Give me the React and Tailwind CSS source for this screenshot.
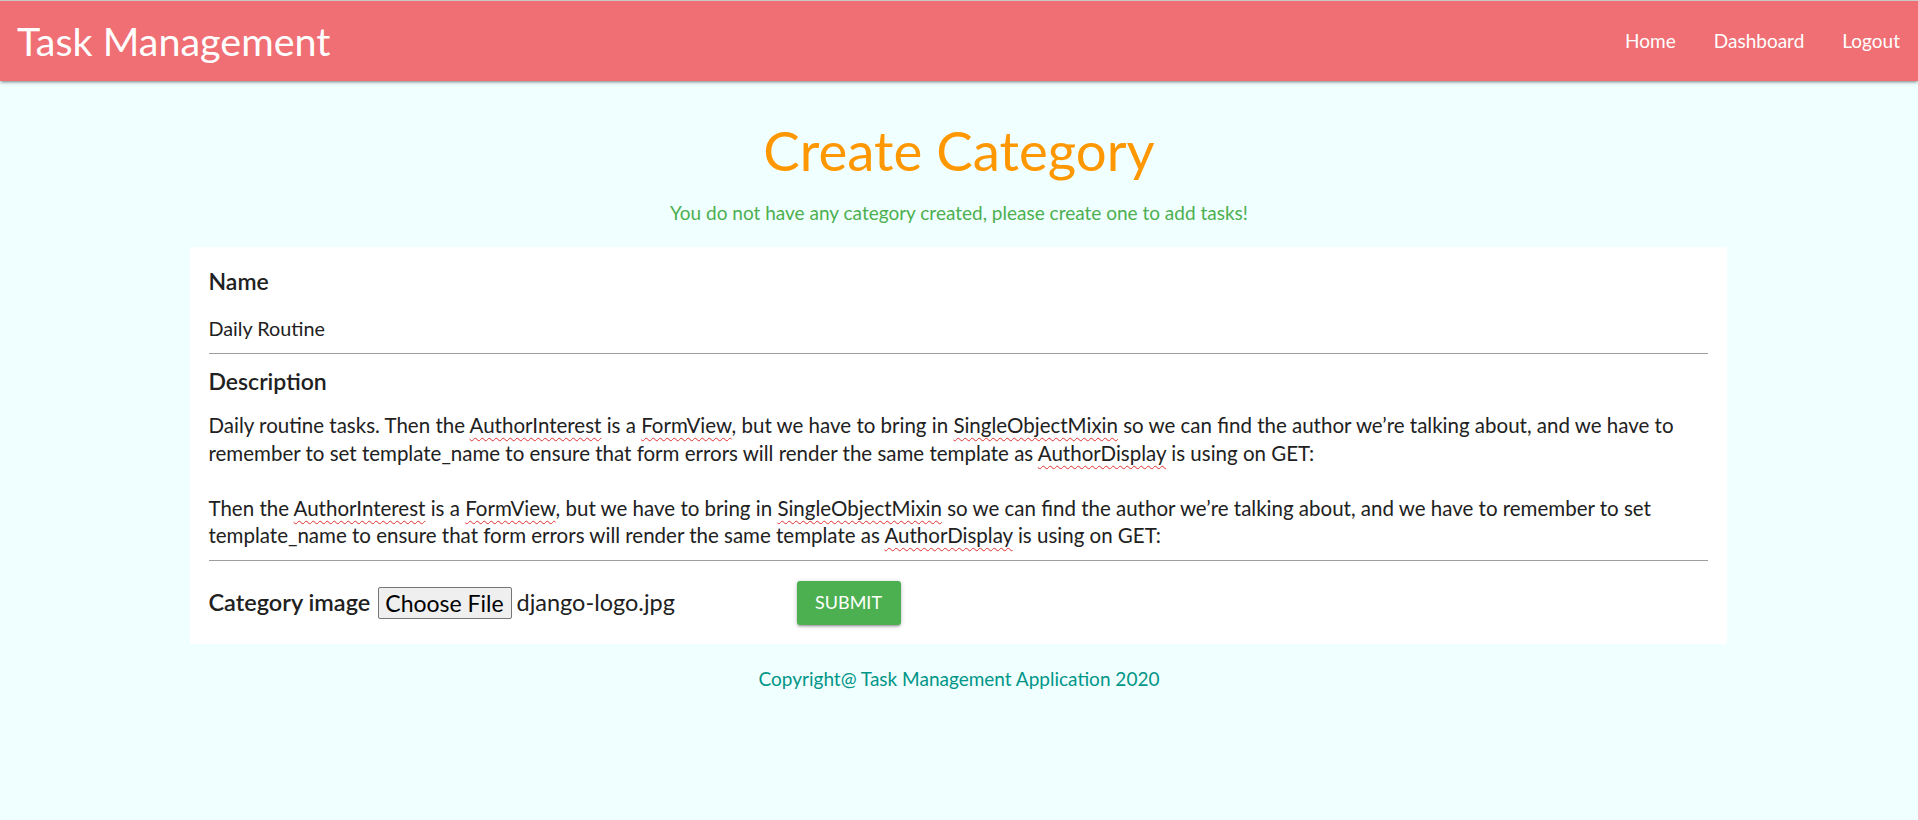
import React from "react";

const misspelled = "underline decoration-wavy decoration-[#e0302f] decoration-[1px] underline-offset-[4px]";

const Word = ({ children }) => <span className={misspelled}>{children}</span>;

const App = () => {
  return (
    <div className="min-h-screen bg-[#f0ffff] font-['Lato','Open_Sans',sans-serif] text-[#212121]">
      {/* Navbar */}
      <nav className="h-[81px] bg-[#ef6f74] border-t border-[#c9c9c9] flex items-center justify-between shadow-[0_2px_2px_0_rgba(0,0,0,0.14),0_3px_1px_-2px_rgba(0,0,0,0.12),0_1px_5px_0_rgba(0,0,0,0.2)]">
        <a className="pl-[17px] text-[39.5px] leading-none text-white">Task Management</a>
        <ul className="flex pr-[18px] text-[19px] text-white">
          <li className="px-[19px]">Home</li>
          <li className="px-[19px]">Dashboard</li>
          <li className="pl-[19px]">Logout</li>
        </ul>
      </nav>

      <div className="w-[1535px] mx-auto">
        <h3 className="mt-[37px] text-center text-[54.6px] leading-[64px] text-[#ff9800]">Create Category</h3>
        <p className="mt-[17px] text-center text-[19px] leading-[28px] text-[#4caf50]">
          You do not have any category created, please create one to add tasks!
        </p>

        {/* Form card */}
        <form className="mt-[20px] -ml-[2px] bg-white px-[19px] pt-[19px] pb-[19px]">
          <label className="block text-[23px] leading-[30px] font-semibold text-[#212121]">Name</label>
          <div className="mt-[18px] pb-[11px] border-b border-[#9e9e9e] text-[19.8px] leading-[28px]">Daily Routine</div>

          <label className="mt-[12px] block text-[23px] leading-[30px] font-semibold text-[#212121]">Description</label>
          <div className="mt-[16px] pb-[10px] border-b border-[#9e9e9e] text-[20.5px] leading-[27.6px] whitespace-nowrap">
            <div>
              Daily routine tasks. Then the <Word>AuthorInterest</Word> is a <Word>FormView</Word>, but we have to bring in <Word>SingleObjectMixin</Word> so we can find the author we’re talking about, and we have to
            </div>
            <div>
              remember to set template_name to ensure that form errors will render the same template as <Word>AuthorDisplay</Word> is using on GET:
            </div>
            <div>&nbsp;</div>
            <div>
              Then the <Word>AuthorInterest</Word> is a <Word>FormView</Word>, but we have to bring in <Word>SingleObjectMixin</Word> so we can find the author we’re talking about, and we have to remember to set
            </div>
            <div>
              template_name to ensure that form errors will render the same template as <Word>AuthorDisplay</Word> is using on GET:
            </div>
          </div>

          <div className="mt-[20px] flex items-center h-[44px]">
            <label className="w-[169px] shrink-0 whitespace-nowrap text-[23.5px] font-semibold text-[#212121]">Category image</label>
            <div className="w-[419px] shrink-0 flex items-center">
              <span className="h-[32px] w-[134px] flex items-center justify-center bg-[#efefef] border border-[#767676] rounded-[2px] text-[23px] text-black">
                Choose File
              </span>
              <span className="ml-[5px] text-[23.5px] text-[#212121]">django-logo.jpg</span>
            </div>
            <button
              type="button"
              className="h-[44px] w-[104px] bg-[#4caf50] rounded-[3px] text-white text-[18px] uppercase shadow-[0_2px_2px_0_rgba(0,0,0,0.14),0_3px_1px_-2px_rgba(0,0,0,0.12),0_1px_5px_0_rgba(0,0,0,0.2)]"
            >
              Submit
            </button>
          </div>
        </form>

        <p className="mt-[21px] text-center text-[19px] leading-[28px] text-[#009688]">
          Copyright@ Task Management Application 2020
        </p>
      </div>
    </div>
  );
};

export default App;
